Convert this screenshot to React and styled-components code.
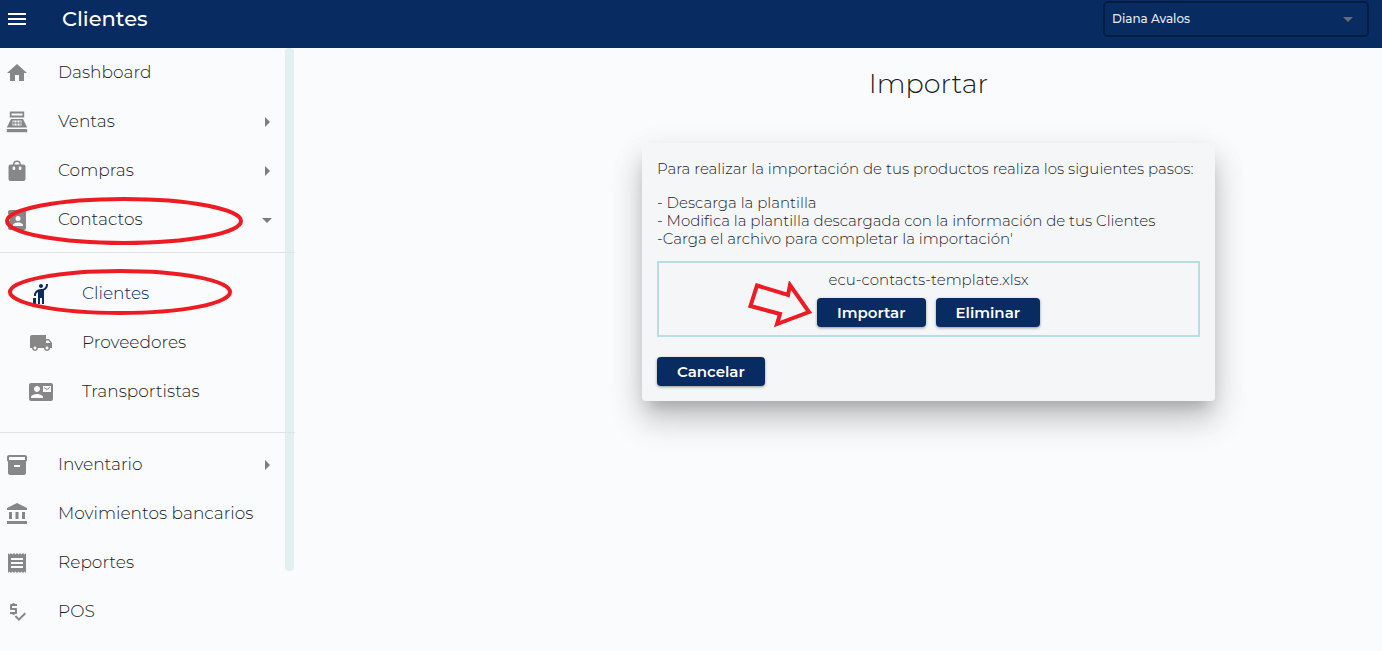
import React from 'react';
import styled, {createGlobalStyle} from 'styled-components';
import {
    MdAccountBalance, MdArrowDropDown, MdArrowRight, MdContactMail, MdHail, MdHome,
    MdInventory2, MdLocalShipping, MdMenu, MdPriceCheck, MdReceipt,
} from 'react-icons/md';

const RegisterIcon = () => (
    <svg viewBox="0 0 24 24" width="1em" height="1em" fill="currentColor" aria-hidden="true">
        <path fillRule="evenodd" d="M4.800 1.500h14.400v6H4.800zM6.500 3.500v2h11v-2z"/>
        <path fillRule="evenodd" d="M6 9h12l4.200 8.500H1.800zM7.500 10.500v5h9v-5z"/>
        <path d="M8.500 10.500h1v5h-1zM11.500 10.500h1v5h-1zM14.500 10.500h1v5h-1zM7.500 12.500h9v1h-9zM1.800 19h20.400v3.200H1.800z"/>
    </svg>
);

const BagIcon = () => (
    <svg viewBox="0 0 24 24" width="1em" height="1em" fill="currentColor" aria-hidden="true">
        <path fillRule="evenodd" d="M18.500 5.500H16a4 4 0 0 0-8 0H5.500a2 2 0 0 0-2 2V20c0 1.100.9 2 2 2h13c1.100 0 2-.9 2-2V7.500a2 2 0 0 0-2-2zM12 3a2.500 2.500 0 0 1 2.500 2.500h-5A2.500 2.500 0 0 1 12 3zM8.900 7.500a1.300 1.300 0 0 1 1.300 1.300v.9a1.300 1.300 0 0 1-2.600 0v-.9a1.300 1.300 0 0 1 1.300-1.300zM15.100 7.500a1.300 1.300 0 0 1 1.300 1.300v.9a1.300 1.300 0 0 1-2.600 0v-.9a1.300 1.300 0 0 1 1.300-1.300z"/>
    </svg>
);

const ContactsIcon = () => (
    <svg viewBox="0 0 24 24" width="1em" height="1em" fill="currentColor" aria-hidden="true">
        <path fillRule="evenodd" d="M5 2h14a2 2 0 0 1 2 2v16a2 2 0 0 1-2 2H5a2 2 0 0 1-2-2v-2h2v-2H3v-3h2v-2H3V8h2V6H3V4a2 2 0 0 1 2-2zM13 8a2.500 2.500 0 1 0 0 5 2.500 2.500 0 0 0 0-5zM8 18h10v-1c0-1.700-3.300-2.600-5-2.600S8 15.300 8 17z"/>
    </svg>
);

const contactLinks = [
    {label: 'Clientes', icon: <MdHail/>, active: true, marked: true},
    {label: 'Proveedores', icon: <MdLocalShipping/>},
    {label: 'Transportistas', icon: <MdContactMail/>},
];

const menu = [
    {label: 'Dashboard', icon: <MdHome/>},
    {label: 'Ventas', icon: <RegisterIcon/>, arrow: <MdArrowRight/>},
    {label: 'Compras', icon: <BagIcon/>, arrow: <MdArrowRight/>},
    {label: 'Contactos', icon: <ContactsIcon/>, arrow: <MdArrowDropDown/>, marked: true, items: contactLinks},
    {label: 'Inventario', icon: <MdInventory2/>, arrow: <MdArrowRight/>},
    {label: 'Movimientos bancarios', icon: <MdAccountBalance/>},
    {label: 'Reportes', icon: <MdReceipt/>},
    {label: 'POS', icon: <MdPriceCheck/>},
];

const App = () => (
    <>
        <GlobalStyle/>
        <Header>
            <MenuButton type="button" aria-label="Menu"><MdMenu/></MenuButton>
            <HeaderTitle>Clientes</HeaderTitle>
            <UserField>
                <UserSelect aria-label="Usuario" defaultValue="Diana Avalos">
                    <option>Diana Avalos</option>
                </UserSelect>
                <MdArrowDropDown/>
            </UserField>
        </Header>
        <Body>
            <Sidebar>
                <Nav>
                    {menu.map((entry) => (
                        <React.Fragment key={entry.label}>
                            <NavLink href="#">
                                <NavIcon>{entry.icon}</NavIcon>
                                <NavLabel>{entry.label}</NavLabel>
                                {entry.arrow && <NavArrow>{entry.arrow}</NavArrow>}
                                {entry.marked && <Ring viewBox="0 0 240 50"><ellipse cx="120" cy="25" rx="117" ry="22"/></Ring>}
                            </NavLink>
                            {entry.items && (
                                <SubNav>
                                    {entry.items.map((item) => (
                                        <NavLink key={item.label} href="#" $nested $active={item.active}>
                                            <NavIcon $active={item.active}>{item.icon}</NavIcon>
                                            <NavLabel>{item.label}</NavLabel>
                                            {item.marked && <Ring $nested viewBox="0 0 226 48"><ellipse cx="113" cy="24" rx="110" ry="21"/></Ring>}
                                        </NavLink>
                                    ))}
                                </SubNav>
                            )}
                        </React.Fragment>
                    ))}
                </Nav>
                <ScrollThumb/>
            </Sidebar>
            <Main>
                <Title>Importar</Title>
                <Card>
                    <Text>Para realizar la importación de tus productos realiza los siguientes pasos:</Text>
                    <Steps>
                        - Descarga la plantilla<br/>
                        - Modifica la plantilla descargada con la información de tus Clientes<br/>
                        -Carga el archivo para completar la importación'
                    </Steps>
                    <DropZone>
                        <Text>ecu-contacts-template.xlsx</Text>
                        <Actions>
                            <Button type="button">Importar</Button>
                            <Button type="button">Eliminar</Button>
                            <Pointer viewBox="0 0 64 50">
                                <path d="M9 4.500L40 14L42 4L61 31L29 43L32 33L2.500 25Z"/>
                            </Pointer>
                        </Actions>
                    </DropZone>
                    <Button type="button">Cancelar</Button>
                </Card>
            </Main>
        </Body>
    </>
);

export default App;

const GlobalStyle = createGlobalStyle`
  * {
    box-sizing: border-box;
  }

  body {
    margin: 0;
    background-color: #fafbfd;
    color: #1c1d1f;
    font-family: Montserrat, Inter, sans-serif;
    font-size: 15px;
    overflow: hidden;
  }

  button, select {
    font-family: inherit;
  }
`;

const Header = styled.header`
  display: flex;
  align-items: flex-start;
  height: 48px;
  padding: 1px 13px 0 5px;
  background-color: #082b61;
  color: #fff;
`;

const MenuButton = styled.button`
  display: flex;
  margin-top: 6px;
  padding: 0;
  border: none;
  background: none;
  color: inherit;
  font-size: 24px;
`;

const HeaderTitle = styled.h1`
  flex: 1;
  margin: 0 0 0 33px;
  font-size: 21px;
  font-weight: 500;
  line-height: 36px;
`;

const UserField = styled.div`
  position: relative;
  width: 266px;
  color: #6b6b6b;
  font-size: 24px;

  svg {
    position: absolute;
    top: 6px;
    right: 9px;
    pointer-events: none;
  }
`;

const UserSelect = styled.select`
  display: block;
  width: 100%;
  height: 36px;
  padding: 0 32px 2px 7px;
  appearance: none;
  border: 2px solid #051c40;
  border-radius: 5px;
  background: none;
  color: #e6eaf0;
  font-size: 12px;
  font-weight: 500;
`;

const Body = styled.div`
  display: flex;
`;

const Sidebar = styled.aside`
  position: relative;
  flex: 0 0 295px;
`;

const Nav = styled.nav`
  display: flex;
  flex-direction: column;
`;

const SubNav = styled.div`
  margin: 8px 0 7px;
  padding: 16px 0;
  border-top: 1px solid #e1e4e6;
  border-bottom: 1px solid #e1e4e6;
`;

const NavLink = styled.a`
  position: relative;
  display: flex;
  align-items: center;
  height: 49px;
  padding: 0 16px 0 ${({$nested}) => ($nested ? 29 : 5)}px;
  color: ${({$active}) => ($active ? '#082b61' : '#1c1d1f')};
  font-size: 17px;
  font-weight: 300;
  text-decoration: none;
`;

const NavIcon = styled.span`
  display: flex;
  width: 53px;
  color: ${({$active}) => ($active ? '#082b61' : '#878787')};
  font-size: 24px;
`;

const NavLabel = styled.span`
  flex: 1;
  padding-bottom: 2px;
`;

const NavArrow = styled.span`
  display: flex;
  color: #7d7d7d;
  font-size: 24px;
`;

const Ring = styled.svg`
  position: absolute;
  top: ${({$nested}) => ($nested ? -1 : 1)}px;
  left: ${({$nested}) => ($nested ? 7 : 4)}px;
  width: ${({$nested}) => ($nested ? 226 : 240)}px;
  fill: none;
  stroke: #ed1c24;
  stroke-width: 4;
  pointer-events: none;
`;

const ScrollThumb = styled.div`
  position: absolute;
  top: 0;
  right: 1px;
  width: 9px;
  height: 523px;
  border-radius: 4px;
  background-color: #e2f0f2;
  z-index: -1;
`;

const Main = styled.main`
  display: flex;
  flex: 1;
  flex-direction: column;
  align-items: center;
  padding: 16px 0 16px 180px;
`;

const Title = styled.h2`
  margin: 0 0 39px;
  font-size: 27px;
  font-weight: 300;
  line-height: 40px;
`;

const Card = styled.section`
  width: 573px;
  padding: 17px 15px 15px;
  border-radius: 4px;
  background-color: #f5f6f8;
  box-shadow: 0 11px 15px -7px rgba(0, 0, 0, 0.2),
    0 20px 32px 1px rgba(0, 0, 0, 0.16),
    0 9px 32px 2px rgba(0, 0, 0, 0.08);
`;

const Text = styled.p`
  margin: 0;
  font-weight: 300;
  line-height: 18px;
`;

const Steps = styled(Text)`
  margin: 16px 0 13px;
`;

const DropZone = styled.div`
  display: flex;
  flex-direction: column;
  align-items: center;
  gap: 9px;
  margin-bottom: 20px;
  padding: 8px;
  border: 2px solid #b9dee2;
`;

const Actions = styled.div`
  position: relative;
  display: flex;
  gap: 10px;
`;

const Button = styled.button`
  height: 29px;
  padding: 0 20px;
  border: none;
  border-radius: 4px;
  background-color: #082b61;
  box-shadow: 0 1px 3px rgba(0, 0, 0, 0.4);
  color: #fff;
  font-size: 15px;
  font-weight: 600;
`;

const Pointer = styled.svg`
  position: absolute;
  top: -17px;
  right: 100%;
  width: 64px;
  margin-right: 5px;
  fill: none;
  stroke: #ed1c24;
  stroke-width: 4;
`;
